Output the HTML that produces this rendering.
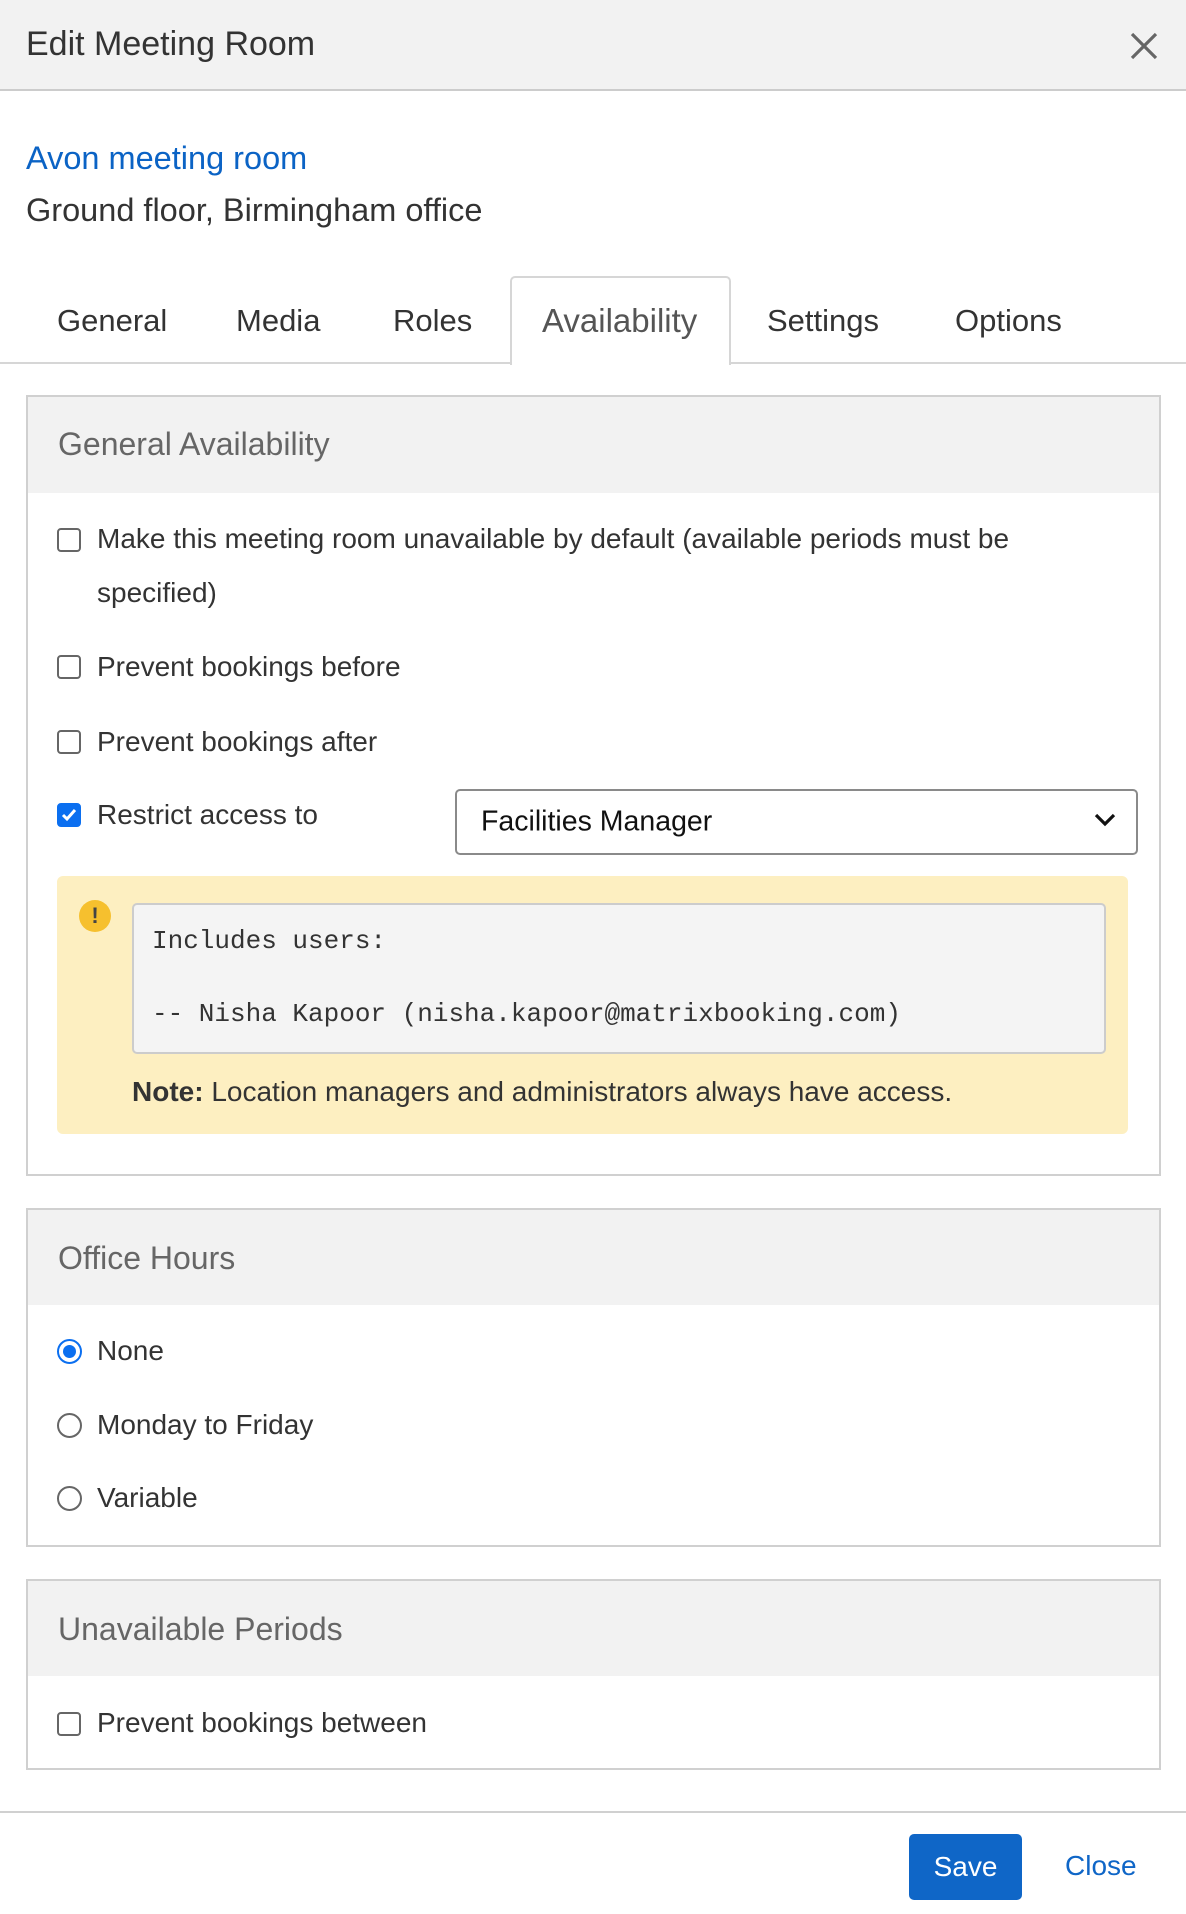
<!DOCTYPE html>
<html><head><meta charset="utf-8"><style>
*{box-sizing:border-box;margin:0;padding:0}
body{width:1186px;height:1914px;background:#fff;font-family:"Liberation Sans",Arial,sans-serif;color:#333;position:relative;overflow:hidden}
.a{position:absolute;white-space:nowrap}
.hdr{left:0;top:0;width:1186px;height:91px;background:#f2f2f2;border-bottom:2px solid #ccc}
.panel{position:absolute;left:26px;width:1135px;border:2px solid #d0d0d0;background:#fff}
.ph{background:#f2f2f2;position:absolute;left:0;right:0;top:0}
.pt{position:absolute;left:30px;font-size:32px;color:#666}
.cb{position:absolute;left:57px;width:24px;height:24px;border:2px solid #666;border-radius:4px;background:#fff}
.rd{position:absolute;left:57px;width:25px;height:25px;border:2px solid #666;border-radius:50%;background:#fff}
.lbl{position:absolute;left:97px;font-size:28px;color:#333;white-space:nowrap;transform:translateY(-50%)}
.tab{position:absolute;top:321px;transform:translateY(-50%);font-size:31px;color:#333}
</style></head><body>
<div class="a hdr"></div>
<div class="a" style="left:26px;top:25px;font-size:34px;color:#333">Edit Meeting Room</div>
<svg class="a" style="left:1130px;top:32px" width="28" height="28" viewBox="0 0 28 28"><path d="M2 2L26 26M26 2L2 26" stroke="#666" stroke-width="3.2"/></svg>
<div class="a" style="left:26px;top:140px;font-size:32.5px;color:#0b63c5">Avon meeting room</div>
<div class="a" style="left:26px;top:192px;font-size:32.5px;color:#333">Ground floor, Birmingham office</div>
<div class="a" style="left:0;top:362px;width:1186px;height:2px;background:#d6d6d6"></div>
<div class="a" style="left:510px;top:276px;width:221px;height:89px;border:2px solid #d6d6d6;border-bottom:none;border-radius:5px 5px 0 0;background:#fff"></div>
<div class="tab" style="left:57px">General</div>
<div class="tab" style="left:236px">Media</div>
<div class="tab" style="left:393px">Roles</div>
<div class="tab" style="left:542px;color:#555;font-size:33px">Availability</div>
<div class="tab" style="left:767px">Settings</div>
<div class="tab" style="left:955px">Options</div>

<div class="panel" style="top:395px;height:781px"><div class="ph" style="height:96px"></div><div class="pt" style="top:29px">General Availability</div></div>
<div class="cb" style="top:528px"></div><div class="lbl" style="top:539px">Make this meeting room unavailable by default (available periods must be</div>
<div class="lbl" style="top:593px">specified)</div>
<div class="cb" style="top:655px"></div><div class="lbl" style="top:667px">Prevent bookings before</div>
<div class="cb" style="top:730px"></div><div class="lbl" style="top:742px">Prevent bookings after</div>
<div class="cb" style="top:803px;background:#0b6ff0;border-color:#0b6ff0"><svg width="20" height="20" viewBox="0 0 20 20" style="position:absolute;left:0;top:0"><path d="M4 10l4 4 8-9" stroke="#fff" stroke-width="3" fill="none"/></svg></div>
<div class="lbl" style="top:815px">Restrict access to</div>
<div class="a" style="left:455px;top:789px;width:683px;height:66px;border:2px solid #8a8a8a;border-radius:5px"></div>
<div class="a" style="left:481px;top:822px;transform:translateY(-50%);font-size:28.5px;color:#111">Facilities Manager</div>
<svg class="a" style="left:1093px;top:811px" width="24" height="18" viewBox="0 0 24 18"><path d="M3 4l9 9 9-9" stroke="#111" stroke-width="3.2" fill="none"/></svg>
<div class="a" style="left:57px;top:876px;width:1071px;height:258px;background:#fdefc1;border-radius:6px"></div>
<div class="a" style="left:79px;top:900px;width:32px;height:32px;border-radius:50%;background:#f6c02e;color:#444;font-weight:bold;font-size:22px;text-align:center;line-height:32px">!</div>
<div class="a" style="left:132px;top:903px;width:974px;height:151px;background:#f4f4f4;border:2px solid #ccc;border-radius:5px"></div>
<div class="a" style="left:152px;top:941px;transform:translateY(-50%);font-family:'Liberation Mono',monospace;font-size:26px;color:#333">Includes users:</div>
<div class="a" style="left:152px;top:1014px;transform:translateY(-50%);font-family:'Liberation Mono',monospace;font-size:26px;color:#333">-- Nisha Kapoor (nisha.kapoor@matrixbooking.com)</div>
<div class="a" style="left:132px;top:1092px;transform:translateY(-50%);font-size:28px;color:#333"><b>Note:</b> Location managers and administrators always have access.</div>

<div class="panel" style="top:1208px;height:339px"><div class="ph" style="height:95px"></div><div class="pt" style="top:30px">Office Hours</div></div>
<div class="rd" style="top:1339px;border-color:#0b6ff0"><div style="position:absolute;left:4px;top:4px;width:13px;height:13px;border-radius:50%;background:#0b6ff0"></div></div>
<div class="lbl" style="top:1351px">None</div>
<div class="rd" style="top:1413px"></div><div class="lbl" style="top:1425px">Monday to Friday</div>
<div class="rd" style="top:1486px"></div><div class="lbl" style="top:1498px">Variable</div>

<div class="panel" style="top:1579px;height:191px"><div class="ph" style="height:95px"></div><div class="pt" style="top:30px">Unavailable Periods</div></div>
<div class="cb" style="top:1712px"></div><div class="lbl" style="top:1723px">Prevent bookings between</div>

<div class="a" style="left:0;top:1811px;width:1186px;height:2px;background:#d0d0d0"></div>
<div class="a" style="left:909px;top:1834px;width:113px;height:66px;background:#0f66c7;border-radius:5px;color:#fff;font-size:28px;text-align:center;line-height:66px">Save</div>
<div class="a" style="left:1065px;top:1866px;transform:translateY(-50%);font-size:28px;color:#0f66c7">Close</div>
</body></html>
